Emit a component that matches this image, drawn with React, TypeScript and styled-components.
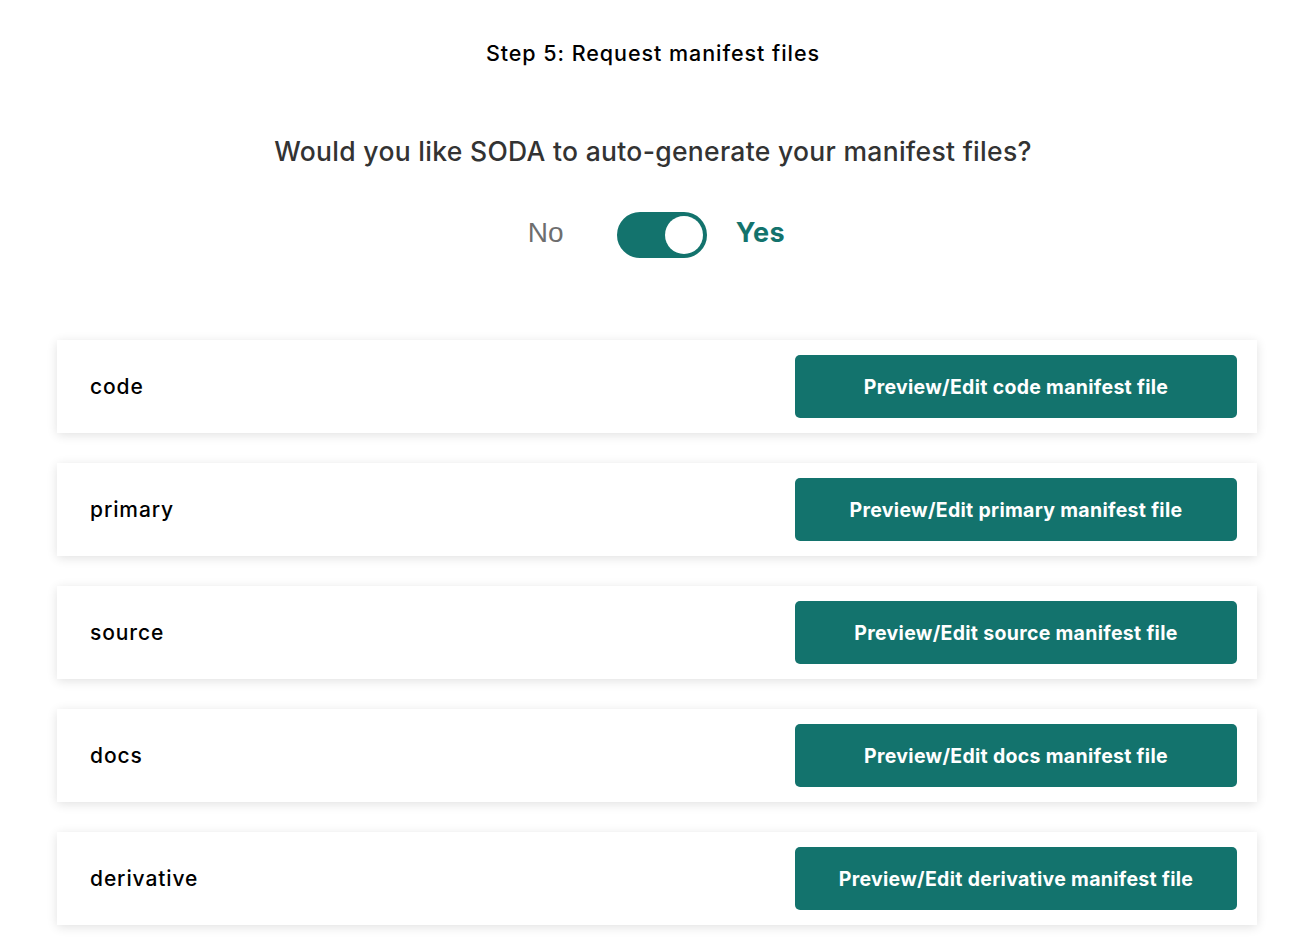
import React, { useState } from "react";
import styled, { createGlobalStyle } from "styled-components";

const GlobalStyle = createGlobalStyle`
  html, body { margin: 0; padding: 0; background: #ffffff; }
  body { font-family: "Inter", "Noto Sans", sans-serif; }
`;

const Page = styled.div`
  width: 1306px;
  min-height: 946px;
  box-sizing: border-box;
  padding: 38px 0 0 0;
  display: flex;
  flex-direction: column;
  align-items: center;
`;

const StepTitle = styled.h2`
  margin: 0;
  font-family: "Inter", sans-serif;
  font-size: 21.5px;
  font-weight: 500;
  letter-spacing: 0.95px;
  color: #000;
  line-height: 30px;
`;

const Question = styled.h3`
  margin: 65px 0 0 0;
  font-family: "Inter", sans-serif;
  font-size: 26.5px;
  font-weight: 500;
  letter-spacing: 0.3px;
  color: #333333;
  line-height: 36px;
`;

const ToggleRow = styled.div`
  margin-top: 43px;
  margin-left: 7px;
  display: flex;
  align-items: center;
`;

const NoLabel = styled.span`
  font-family: "Liberation Sans", Arial, sans-serif;
  font-size: 28px;
  font-weight: 400;
  color: #6e6e6e;
  line-height: 40px;
  position: relative;
  top: -2px;
`;

const YesLabel = styled.span`
  font-family: "Inter", sans-serif;
  font-size: 27px;
  font-weight: 700;
  letter-spacing: 0.5px;
  color: #13736d;
  line-height: 40px;
  position: relative;
  top: -2px;
`;

const Switch = styled.button<{ $on: boolean }>`
  position: relative;
  width: 90px;
  height: 46px;
  margin: 0 29px 0 53px;
  padding: 0;
  border: 2px solid #13736d;
  border-radius: 23px;
  background: ${(p) => (p.$on ? "#13736d" : "#ffffff")};
  cursor: pointer;
  box-sizing: border-box;
`;

const Knob = styled.span<{ $on: boolean }>`
  position: absolute;
  top: 2px;
  left: ${(p) => (p.$on ? "46px" : "2px")};
  width: 38px;
  height: 38px;
  border-radius: 50%;
  background: #ffffff;
`;

const List = styled.div`
  margin-top: 82px;
  margin-left: 8px;
  width: 1200px;
  display: flex;
  flex-direction: column;
  gap: 30px;
`;

const Card = styled.div`
  height: 93px;
  box-sizing: border-box;
  padding: 0 20px 0 33px;
  background: #ffffff;
  box-shadow: 0 2px 10px rgba(0, 0, 0, 0.12);
  display: flex;
  align-items: center;
  justify-content: space-between;
`;

const CardLabel = styled.span`
  font-family: "Inter", sans-serif;
  font-size: 21px;
  font-weight: 500;
  letter-spacing: 0.9px;
  color: #000;
`;

const ActionButton = styled.button`
  width: 442px;
  height: 63px;
  border: none;
  border-radius: 5px;
  background: #13736d;
  color: #ffffff;
  font-family: "Inter", sans-serif;
  font-size: 19.5px;
  font-weight: 700;
  letter-spacing: 0.3px;
  cursor: pointer;
`;

const folders = ["code", "primary", "source", "docs", "derivative"];

export default function App() {
  const [on, setOn] = useState(true);
  return (
    <>
      <GlobalStyle />
      <Page>
        <StepTitle>Step 5: Request manifest files</StepTitle>
        <Question>Would you like SODA to auto-generate your manifest files?</Question>
        <ToggleRow>
          <NoLabel>No</NoLabel>
          <Switch $on={on} onClick={() => setOn(!on)} aria-label="toggle">
            <Knob $on={on} />
          </Switch>
          <YesLabel>Yes</YesLabel>
        </ToggleRow>
        <List>
          {folders.map((f) => (
            <Card key={f}>
              <CardLabel>{f}</CardLabel>
              <ActionButton>Preview/Edit {f} manifest file</ActionButton>
            </Card>
          ))}
        </List>
      </Page>
    </>
  );
}
